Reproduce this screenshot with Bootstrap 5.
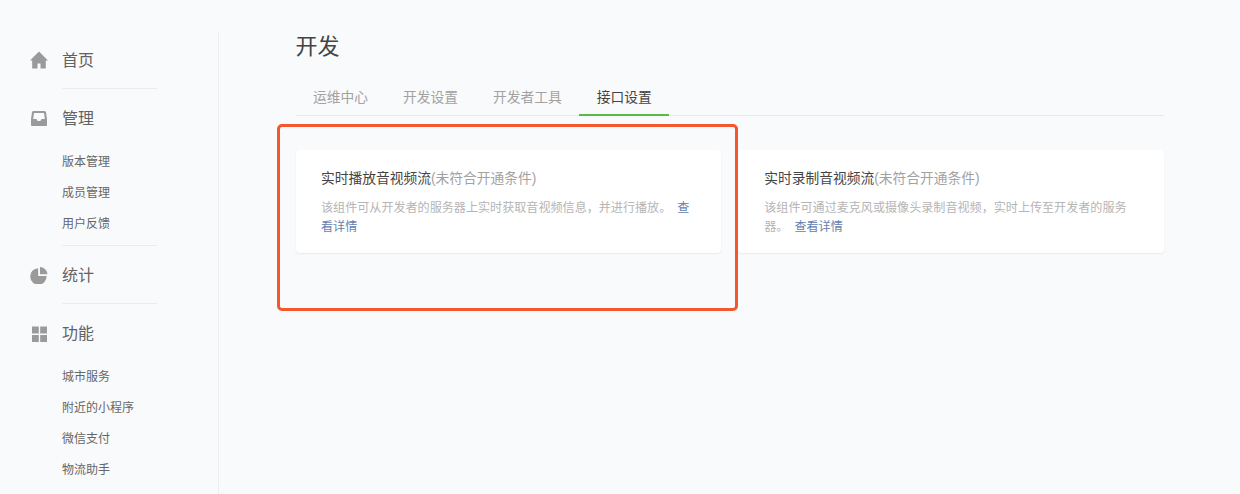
<!DOCTYPE html>
<html lang="zh-CN">
<head>
<meta charset="utf-8">
<title>开发</title>
<link href="https://cdn.jsdelivr.net/npm/bootstrap@5.3.0/dist/css/bootstrap.min.css" rel="stylesheet">
<style>
html,body{height:494px;overflow:hidden}
body{background:#f9fafc;font-family:"Liberation Sans","Noto Sans CJK SC",sans-serif;color:#444;position:relative}
.page-wrap{padding-top:32px;height:494px}
.side{width:219px;flex:none;border-right:1px solid #eceef1;padding:16px 0 0 30px;height:462px}
.side-head{height:24px;line-height:24px;font-size:16px;color:#626262;gap:14px}
.side-head span{margin-top:2px}
.side-head svg{width:18px;height:18px;flex:none;fill:#9a9a9a}
.side-rule{margin:16px 0 17px 32px;width:95px;height:1px;background:#e9ebee}
.side-rule.tight{margin-top:5.5px}
.side-sub{margin:16.5px 0 0 32px;padding:0;list-style:none}
.side-sub li{height:31px;line-height:31px;font-size:12px;color:#666}
.main-area{padding:0 76px 0 76.5px;min-width:0}
.page-title{font-size:22px;line-height:30px;margin:0;font-weight:400;color:#444}
.tab-bar{margin-top:18px;height:36px;border-bottom:1px solid #e7e9ec}
.tab-bar .nav-link{padding:0 17.5px;height:36px;line-height:36px;font-size:13.75px;color:#a2a2a2;border-bottom:2px solid transparent}
.tab-bar .nav-link.active{color:#444;border-bottom-color:#5cb947}
.cards-row{margin-top:34px;gap:17px}
.api-card{flex:1 1 0;height:103px;border:0;border-radius:4px;background:#fff;box-shadow:0 1px 2px rgba(0,0,0,.07);padding:19px 26px 0 25.5px}
.api-card + .api-card{padding-left:26.5px}
.api-title{font-size:13.75px;line-height:20px;margin:0 0 10px;font-weight:400;color:#444}
.api-title span{color:#a2a2a2}
.api-desc{font-size:12.08px;line-height:19px;margin:0;color:#b5b5b5}
.api-desc a{color:#6580ad;text-decoration:none;margin-left:6px}
.red-frame{position:absolute;left:277px;top:124px;width:461px;height:187px;border:3px solid #f4562d;border-radius:5px;pointer-events:none}
</style>
</head>
<body>
<div class="page-wrap d-flex">
  <aside class="side">
    <div class="side-head d-flex align-items-center">
      <svg viewBox="0 0 18 18"><path d="M9 .5 L18 9.4 H15.8 V17.5 H10.5 V12.5 H7.5 V17.5 H2.2 V9.4 H0 Z"/></svg><span>首页</span>
    </div>
    <div class="side-rule"></div>
    <div class="side-head d-flex align-items-center">
      <svg viewBox="0 0 18 18"><path fill-rule="evenodd" d="M3.6 2 H14.4 Q15.6 2 16 3 L17 10 V16 Q17 17 16 17 H2 Q1 17 1 16 V10 L2 3 Q2.4 2 3.6 2 Z M4 4 L3.2 10 H6.5 L7.6 12 H10.4 L11.5 10 H14.8 L14 4 Z"/></svg><span>管理</span>
    </div>
    <ul class="side-sub">
      <li>版本管理</li>
      <li>成员管理</li>
      <li>用户反馈</li>
    </ul>
    <div class="side-rule tight"></div>
    <div class="side-head d-flex align-items-center">
      <svg viewBox="0 0 18 18"><path d="M8.2 2.2 V10 H16.6 A8.2 8.2 0 1 1 8.2 2.2 Z"/><path d="M10 1 A7.6 7.6 0 0 1 17.4 8.2 H10 Z"/></svg><span>统计</span>
    </div>
    <div class="side-rule"></div>
    <div class="side-head d-flex align-items-center">
      <svg viewBox="0 0 18 18"><rect x="2" y="2.5" width="6.8" height="7"/><rect x="10.2" y="2.5" width="6.8" height="7"/><rect x="2" y="11" width="6.8" height="7"/><rect x="10.2" y="11" width="6.8" height="7"/></svg><span>功能</span>
    </div>
    <ul class="side-sub">
      <li>城市服务</li>
      <li>附近的小程序</li>
      <li>微信支付</li>
      <li>物流助手</li>
    </ul>
  </aside>
  <main class="main-area flex-grow-1">
    <h1 class="page-title">开发</h1>
    <nav class="nav tab-bar">
      <a class="nav-link" href="#">运维中心</a>
      <a class="nav-link" href="#">开发设置</a>
      <a class="nav-link" href="#">开发者工具</a>
      <a class="nav-link active" href="#">接口设置</a>
    </nav>
    <div class="d-flex cards-row">
      <div class="card api-card">
        <h2 class="api-title">实时播放音视频流<span>(未符合开通条件)</span></h2>
        <p class="api-desc">该组件可从开发者的服务器上实时获取音视频信息，并进行播放。<a href="#">查看详情</a></p>
      </div>
      <div class="card api-card">
        <h2 class="api-title">实时录制音视频流<span>(未符合开通条件)</span></h2>
        <p class="api-desc">该组件可通过麦克风或摄像头录制音视频，实时上传至开发者的服务器。<a href="#">查看详情</a></p>
      </div>
    </div>
  </main>
</div>
<div class="red-frame"></div>
</body>
</html>
